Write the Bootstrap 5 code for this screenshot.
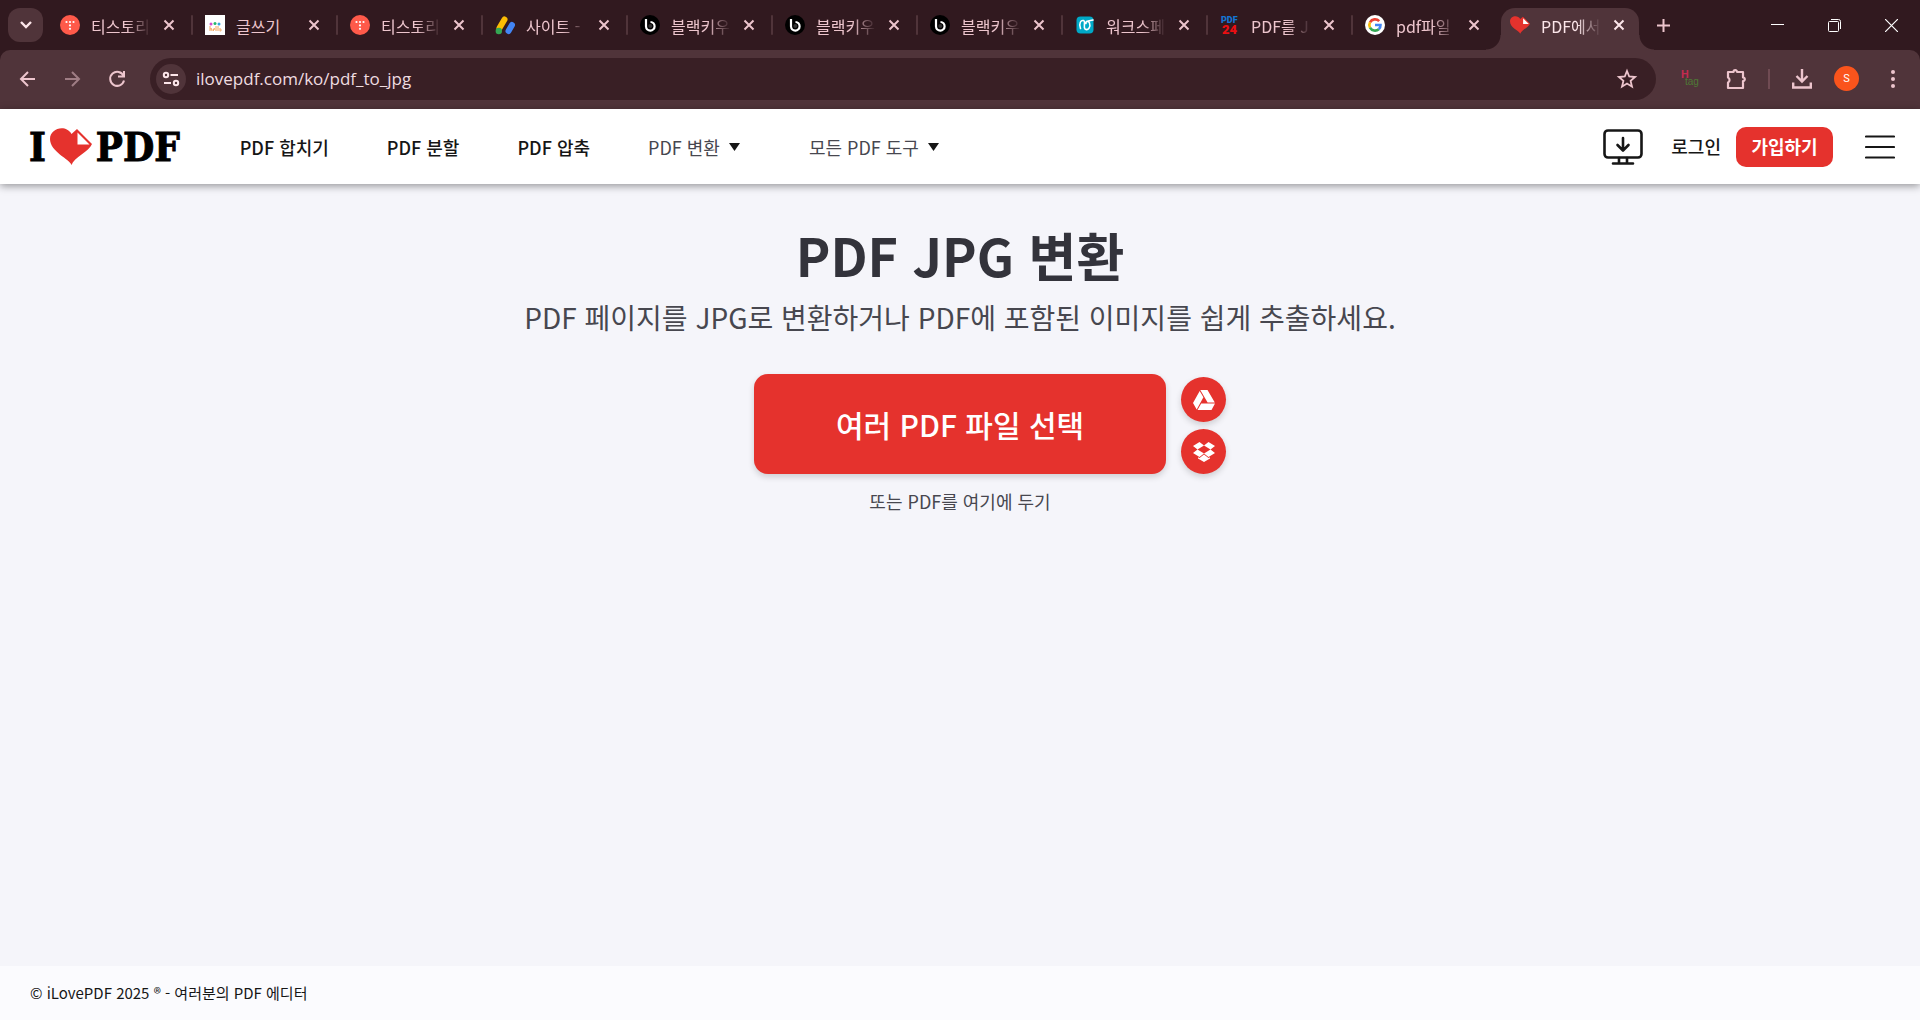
<!DOCTYPE html>
<html lang="ko">
<head>
<meta charset="utf-8">
<meta name="viewport" content="width=device-width, initial-scale=1">
<title>PDF JPG 변환</title>
<link rel="stylesheet" href="https://cdn.jsdelivr.net/npm/bootstrap@5.3.0/dist/css/bootstrap.min.css">
<style>
:root{--frame:#31191f;--bar:#50343a;--field:#391f25;--pink:#edc5cd;--red:#e5322d;--ink:#161616}
body{font-family:"Noto Sans CJK KR","Noto Sans",sans-serif;background:#f5f5fa;color:#47474f}
button{padding:0;border:0;background:none;color:inherit}
svg{display:block;flex:none}
.frame-strip{background:var(--frame);height:50px;color:var(--pink)}
.tab-search{width:35px;height:34px;border-radius:12px;background:var(--bar);margin:0 6px 0 8px}
.tab-row{min-width:0}
.chrome-tab{position:relative;flex:0 1 145px;min-width:0;height:50px;padding:0 16px 0 11px}
.chrome-tab::after{content:"";position:absolute;right:1px;top:15px;width:2px;height:20px;background:var(--bar);border-radius:1px}
.chrome-tab:nth-last-child(-n+3)::after{display:none}
.tab-label{font-size:16px;line-height:24px;width:60px;margin:2px 12px 0 11px;overflow:hidden;white-space:nowrap;text-align:left;-webkit-mask-image:linear-gradient(90deg,#000 60%,transparent);mask-image:linear-gradient(90deg,#000 60%,transparent)}
.tab-full{-webkit-mask-image:none;mask-image:none}
.tab-on{color:#fce6ea}
.tab-on>*{position:relative}
.tab-on::before{content:"";position:absolute;inset:8px 5px 0 2px;background:var(--bar);border-radius:14px 14px 0 0}
.tab-foot{position:absolute!important;bottom:0;width:15px;height:15px}
.foot-l{left:-13px;background:radial-gradient(circle at 0 0,transparent 14px,var(--bar) 15px)}
.foot-r{right:-10px;background:radial-gradient(circle at 100% 0,transparent 14px,var(--bar) 15px)}
.new-tab{margin-left:13px}
.win-btns{gap:36px;padding-right:18px;color:#fff}
.tool-wrap{background:var(--frame)}
.tool-strip{background:var(--bar);height:59px;border-radius:10px 10px 0 0;color:var(--pink);padding:0 17px 2px 16px}
.nav-btns{gap:21px;margin-right:20px}
.address{background:var(--field);height:42px;border-radius:21px;padding:0 18px 0 6px}
.site-info{width:30px;height:30px;border-radius:50%;background:var(--bar);margin-right:10px}
.address input{background:none;border:0;outline:0;color:#efdce0;font:17px/26px "Open Sans",sans-serif;min-width:0;padding:0}
.split{width:2px;height:20px;background:#704b53;margin:0 14px 0 20px}
.avatar{width:25px;height:25px;border-radius:50%;background:#fa541c;color:#fff;font:11px/25px Roboto,sans-serif;margin-left:14px}
.site-head{height:75px;background:#fff;box-shadow:0 2px 8px rgba(0,0,0,.4);padding:0 25px 0 29px;color:var(--ink);z-index:1}
.logo{font:bold 40px/50px "DejaVu Serif Condensed","DejaVu Serif",serif;font-stretch:condensed;-webkit-text-stroke:1px #000;color:#000;text-decoration:none;margin-right:60px;gap:4px}
.main-nav{gap:58px;font-size:18px;line-height:26px;font-weight:500}
.main-nav a,.login{color:var(--ink);text-decoration:none;white-space:nowrap}
.main-nav button{color:#47474f;gap:9px;white-space:nowrap;padding-right:11px}
.login{font-size:18px;font-weight:500;margin:0 15px 0 28px}
.signup{width:97px;height:40px;border-radius:10px;background:var(--red);color:#fff;font-size:18px;font-weight:700;margin-right:32px}
.hero{padding:39px 16px 0}
.hero h1{font-size:52px;line-height:64px;font-weight:700;color:#33333b;margin:0}
.hero h2{font-size:28px;line-height:40px;font-weight:400;margin:10px 0 37px}
.pick-row{display:grid;grid-template-columns:1fr auto 1fr;column-gap:15px;align-items:end}
.pick{grid-column:2;width:412px;max-width:100%;height:100px;border-radius:14px;background:var(--red);color:#fff;font-size:30px;font-weight:500;box-shadow:0 3px 6px rgba(0,0,0,.16)}
.cloud{width:45px;height:45px;border-radius:50%;background:var(--red);box-shadow:0 3px 6px rgba(0,0,0,.16)}
.cloud-col{gap:7px}
.drop-note{font-size:18px;line-height:26px;margin:14px 0 0}
.site-foot{height:54px;background:#fbfbfe;color:var(--ink);font-size:15px;padding:1px 30px 0}
</style>
<script src="https://cdn.jsdelivr.net/npm/bootstrap@5.3.0/dist/js/bootstrap.bundle.min.js"></script>
</head>
<body class="d-flex flex-column min-vh-100">
<svg width="0" height="0" class="position-absolute" aria-hidden="true">
<symbol id="x" viewBox="0 0 12 12"><path d="M1.500 1.500l9 9M10.500 1.500l-9 9" stroke="currentColor" stroke-width="2"/></symbol>
<symbol id="tistory" viewBox="0 0 20 20"><circle cx="10" cy="10" r="10" fill="#ff5a4a"/><g fill="#fff"><circle cx="6.500" cy="7" r="1.100"/><circle cx="10" cy="7" r="1.100"/><circle cx="13.500" cy="7" r="1.100"/><circle cx="10" cy="10.400" r="1.100"/><circle cx="10" cy="13.800" r="1.100"/></g></symbol>
<symbol id="black" viewBox="0 0 20 20"><circle cx="10" cy="10" r="10" fill="#000"/><path d="M6 4v7.500a4.300 4.300 0 1 0 4.500-4.500" fill="none" stroke="#fff" stroke-width="2.200"/><circle cx="10.300" cy="11" r="2" fill="#333"/></symbol>
<symbol id="heart" viewBox="0 0 42 37"><path d="M21.500 37C20 31 0 24 0 11 0 0 16-4 21.500 6L27 1 42 16C39 24 24 29 21.500 37z" fill="#e5322d"/><path d="M27.500 4.500V16.500H39.500z" fill="#fff"/></symbol>
</svg>

<header>
<div class="frame-strip d-flex align-items-center">
 <button class="tab-search d-flex align-items-center justify-content-center flex-shrink-0" aria-label="탭 검색"><svg width="12" height="8" viewBox="0 0 12 8" fill="none" stroke="#fce6ea" stroke-width="2.400"><path d="M1 1l5 5 5-5"/></svg></button>
 <div class="tab-row d-flex flex-grow-1 align-items-center">
  <div class="chrome-tab d-flex align-items-center"><svg width="20" height="20"><use href="#tistory"/></svg><button class="tab-label">티스토리</button><button aria-label="닫기"><svg width="12" height="12"><use href="#x"/></svg></button></div>
  <div class="chrome-tab d-flex align-items-center"><svg width="20" height="20" viewBox="0 0 20 20"><path fill="#fff" d="M0 0h20v20H0z"/><circle cx="6" cy="9" r="1.500" fill="#d44bd0"/><circle cx="10" cy="8.500" r="1.500" fill="#26b76b"/><circle cx="14" cy="9" r="1.500" fill="#35a6e0"/><path d="M5 11v5m0-2q2-2 2 2m1.500-1.500q2 0 1-1-2 0-1 2.500M11 11v5m2-5v5m1.500-2.500q2 0 1.500 2t-1.500-1" fill="none" stroke="#f3a45c"/></svg><button class="tab-label tab-full">글쓰기</button><button aria-label="닫기"><svg width="12" height="12"><use href="#x"/></svg></button></div>
  <div class="chrome-tab d-flex align-items-center"><svg width="20" height="20"><use href="#tistory"/></svg><button class="tab-label">티스토리</button><button aria-label="닫기"><svg width="12" height="12"><use href="#x"/></svg></button></div>
  <div class="chrome-tab d-flex align-items-center"><svg width="20" height="20" viewBox="0 0 20 20" stroke-width="6" stroke-linecap="round"><path d="M9.500 4.500L4.500 13" stroke="#fbbc04"/><circle cx="3.800" cy="16" r="3.200" fill="#34a853"/><path d="M17 10l-3.500 6" stroke="#4285f4"/></svg><button class="tab-label">사이트 -</button><button aria-label="닫기"><svg width="12" height="12"><use href="#x"/></svg></button></div>
  <div class="chrome-tab d-flex align-items-center"><svg width="20" height="20"><use href="#black"/></svg><button class="tab-label">블랙키우</button><button aria-label="닫기"><svg width="12" height="12"><use href="#x"/></svg></button></div>
  <div class="chrome-tab d-flex align-items-center"><svg width="20" height="20"><use href="#black"/></svg><button class="tab-label">블랙키우</button><button aria-label="닫기"><svg width="12" height="12"><use href="#x"/></svg></button></div>
  <div class="chrome-tab d-flex align-items-center"><svg width="20" height="20"><use href="#black"/></svg><button class="tab-label">블랙키우</button><button aria-label="닫기"><svg width="12" height="12"><use href="#x"/></svg></button></div>
  <div class="chrome-tab d-flex align-items-center"><svg width="20" height="20" viewBox="0 0 20 20"><rect x="1.500" y="1.500" width="17" height="17" rx="4" fill="#00a9c7"/><path d="M5.500 13.500C3.500 8 6 5 8.500 5.500 11 6 8 12 10 14c3 2 6-2 4.500-6-1-2.500-4-2-3.500.5M13 6l5-1" fill="none" stroke="#fff" stroke-width="1.600" stroke-linecap="round"/></svg><button class="tab-label">워크스페</button><button aria-label="닫기"><svg width="12" height="12"><use href="#x"/></svg></button></div>
  <div class="chrome-tab d-flex align-items-center"><svg width="20" height="20" viewBox="0 0 20 20" font-family="Roboto,sans-serif" font-weight="900"><text x="1" y="8" font-size="9" fill="#1475d1">PDF</text><text x="2" y="19" font-size="13" fill="#e90f12">24</text></svg><button class="tab-label">PDF를 J</button><button aria-label="닫기"><svg width="12" height="12"><use href="#x"/></svg></button></div>
  <div class="chrome-tab d-flex align-items-center"><svg width="20" height="20" viewBox="0 0 20 20" fill="none" stroke-width="2.600"><circle cx="10" cy="10" r="10" fill="#fff"/><path d="M14.200 6.200A5.700 5.700 0 0 0 5 7.300" stroke="#ea4335"/><path d="M5 7.300a5.700 5.700 0 0 0 0 5.400" stroke="#fbbc05"/><path d="M5 12.700a5.700 5.700 0 0 0 8.800 1.500" stroke="#34a853"/><path d="M13.800 14.200A5.700 5.700 0 0 0 15.500 10H10" stroke="#4285f4"/></svg><button class="tab-label">pdf파일</button><button aria-label="닫기"><svg width="12" height="12"><use href="#x"/></svg></button></div>
  <div class="chrome-tab tab-on d-flex align-items-center"><i class="tab-foot foot-l"></i><i class="tab-foot foot-r"></i><svg width="20" height="18"><use href="#heart"/></svg><button class="tab-label">PDF에서</button><button aria-label="닫기"><svg width="12" height="12"><use href="#x"/></svg></button></div>
  <button class="new-tab flex-shrink-0" aria-label="새 탭"><svg width="13" height="13" viewBox="0 0 13 13" stroke="currentColor" stroke-width="2"><path d="M6.500 0v13M0 6.500h13"/></svg></button>
 </div>
 <div class="win-btns d-flex align-items-center flex-shrink-0">
  <button class="px-1" aria-label="최소화"><svg width="13" height="13" viewBox="0 0 13 13" stroke="#fff"><path d="M0 5.500h13"/></svg></button>
  <button class="px-1" aria-label="이전 크기로"><svg width="13" height="13" viewBox="0 0 13 13" fill="none" stroke="#fff"><rect x=".5" y="2.500" width="10" height="10" rx="1"/><path d="M3 .5h7.500a2 2 0 0 1 2 2V10"/></svg></button>
  <button class="px-1" aria-label="창 닫기"><svg width="13" height="13" viewBox="0 0 13 13" stroke="#fff" stroke-width="1.200"><path d="M0 0l13 13M13 0L0 13"/></svg></button>
 </div>
</div>

<div class="tool-wrap">
<div class="tool-strip d-flex align-items-center">
 <div class="nav-btns d-flex">
  <button aria-label="뒤로"><svg width="24" height="24" viewBox="0 0 24 24" fill="none" stroke="currentColor" stroke-width="2"><path d="M19 12H5M12 5l-7 7 7 7"/></svg></button>
  <button aria-label="앞으로" class="opacity-50"><svg width="24" height="24" viewBox="0 0 24 24" fill="none" stroke="currentColor" stroke-width="2"><path d="M4 12h14M11 5l7 7-7 7"/></svg></button>
  <button aria-label="새로고침"><svg width="24" height="24" viewBox="0 0 24 24" fill="none" stroke="currentColor" stroke-width="2"><path d="M17.600 9A7 7 0 1 0 18 13.500M18 4v5.500h-6"/></svg></button>
 </div>
 <div class="address d-flex align-items-center flex-grow-1">
  <button class="site-info d-flex align-items-center justify-content-center flex-shrink-0" aria-label="사이트 정보"><svg width="18" height="16" viewBox="0 0 18 16" fill="none" stroke="#fce6ea" stroke-width="2"><circle cx="4" cy="4" r="2.200"/><path d="M8.500 4H16M2 12h7"/><circle cx="14" cy="12" r="2.200"/></svg></button>
  <input class="flex-grow-1" type="text" aria-label="주소창" value="ilovepdf.com/ko/pdf_to_jpg">
  <button aria-label="북마크"><svg width="22" height="22" viewBox="0 0 22 22" fill="none" stroke="currentColor" stroke-width="1.800"><path d="M11 3l2.200 5.500 5.900.5-4.500 3.900 1.400 5.800-5-3.100-5 3.100 1.400-5.800L2.900 9l5.900-.5z"/></svg></button>
 </div>
 <div class="d-flex align-items-center flex-shrink-0 ps-4">
  <button aria-label="H tag"><svg width="20" height="20" viewBox="0 0 20 20"><text x="1" y="9" font-family="Roboto,sans-serif" font-weight="bold" font-size="11" fill="#c42b50">H</text><text x="5" y="16" font-family="Liberation Sans,sans-serif" font-size="10" fill="#4e7a35">tag</text></svg></button>
  <button class="ms-4" aria-label="확장 프로그램"><svg width="24" height="24" viewBox="0 0 24 24" fill="none" stroke="currentColor" stroke-width="2.200" stroke-linejoin="round"><path d="M4 5h5.500a1.800 1.800 0 0 1 3.600 0H19v5.500a1.800 1.800 0 0 1 0 3.600V21H4v-5.500a2.800 2.800 0 0 0 0-5z"/></svg></button>
  <span class="split"></span>
  <button class="mx-2" aria-label="다운로드"><svg width="20" height="22" viewBox="0 0 20 22" fill="none" stroke="currentColor" stroke-width="2.400"><path d="M10 1v12M4.500 8l5.500 5.500L15.500 8M1.200 14.500v5h17.600v-5"/></svg></button>
  <button class="avatar" aria-label="프로필">S</button>
  <button class="ms-4" aria-label="메뉴"><svg width="20" height="20" viewBox="0 0 20 20" fill="currentColor"><circle cx="10" cy="3" r="2"/><circle cx="10" cy="10" r="2"/><circle cx="10" cy="17" r="2"/></svg></button>
 </div>
</div>
</div>
</header>

<nav class="site-head d-flex align-items-center position-relative">
 <a class="logo d-flex align-items-center" href="#" aria-label="I love PDF"><span>I</span><svg width="42" height="37"><use href="#heart"/></svg><span>PDF</span></a>
 <div class="main-nav d-flex align-items-center">
  <a href="#">PDF 합치기</a><a href="#">PDF 분할</a><a href="#">PDF 압축</a>
  <button class="d-flex align-items-center">PDF 변환 <svg width="11" height="8"><path d="M0 0h11L5.500 8z" fill="#161616"/></svg></button>
  <button class="d-flex align-items-center">모든 PDF 도구 <svg width="11" height="8"><path d="M0 0h11L5.500 8z" fill="#161616"/></svg></button>
 </div>
 <div class="d-flex align-items-center ms-auto">
  <a href="#" aria-label="데스크톱 앱"><svg width="40" height="36" viewBox="0 0 40 36" fill="none" stroke="#161616" stroke-width="2.600" stroke-linecap="round" stroke-linejoin="round"><rect x="1.500" y="1.500" width="37" height="27" rx="3.500"/><path d="M20 9v12M14.500 16l5.500 5.500 5.500-5.500M16 29v5m8-5v5M10 34.500h20"/></svg></a>
  <a class="login" href="#">로그인</a>
  <button class="signup">가입하기</button>
  <button aria-label="메뉴 열기"><svg width="30" height="24" viewBox="0 0 30 24" stroke="#161616" stroke-width="2.200" stroke-linecap="round"><path d="M1 1.500h28M1 12h28M1 22.500h28"/></svg></button>
 </div>
</nav>

<main class="hero flex-grow-1 text-center">
 <h1>PDF JPG 변환</h1>
 <h2>PDF 페이지를 JPG로 변환하거나 PDF에 포함된 이미지를 쉽게 추출하세요.</h2>
 <div class="pick-row">
  <button class="pick">여러 PDF 파일 선택</button>
  <div class="cloud-col d-flex flex-column">
   <button class="cloud d-flex align-items-center justify-content-center" aria-label="Google Drive"><svg width="22" height="20" viewBox="0 0 22 20" fill="#fff"><path d="M7.300 0h7.200l7.300 12.500h-7.200zM6.700 1l3.700 6.300L3.700 19.500 0 13zM8.200 13.500H22L18.500 20H4.500z"/></svg></button>
   <button class="cloud d-flex align-items-center justify-content-center" aria-label="Dropbox"><svg width="22" height="20" viewBox="0 0 22 20" fill="#fff"><path d="M6.500 0L11 3.500 4.500 7.500 0 4zM15.500 0L22 4l-4.500 3.500L11 3.500zM4.500 7.500L11 11.500 6.500 15 0 11zM17.500 7.500L22 11l-6.500 4L11 11.500zM11 12.500l4.500 3.500 1.500-.8v1.200L11 20l-6-3.600v-1.200l1.500.8z"/></svg></button>
  </div>
 </div>
 <p class="drop-note">또는 PDF를 여기에 두기</p>
</main>

<footer class="site-foot d-flex align-items-center"><span>© iLovePDF 2025 ® - 여러분의 PDF 에디터</span></footer>
</body>
</html>
